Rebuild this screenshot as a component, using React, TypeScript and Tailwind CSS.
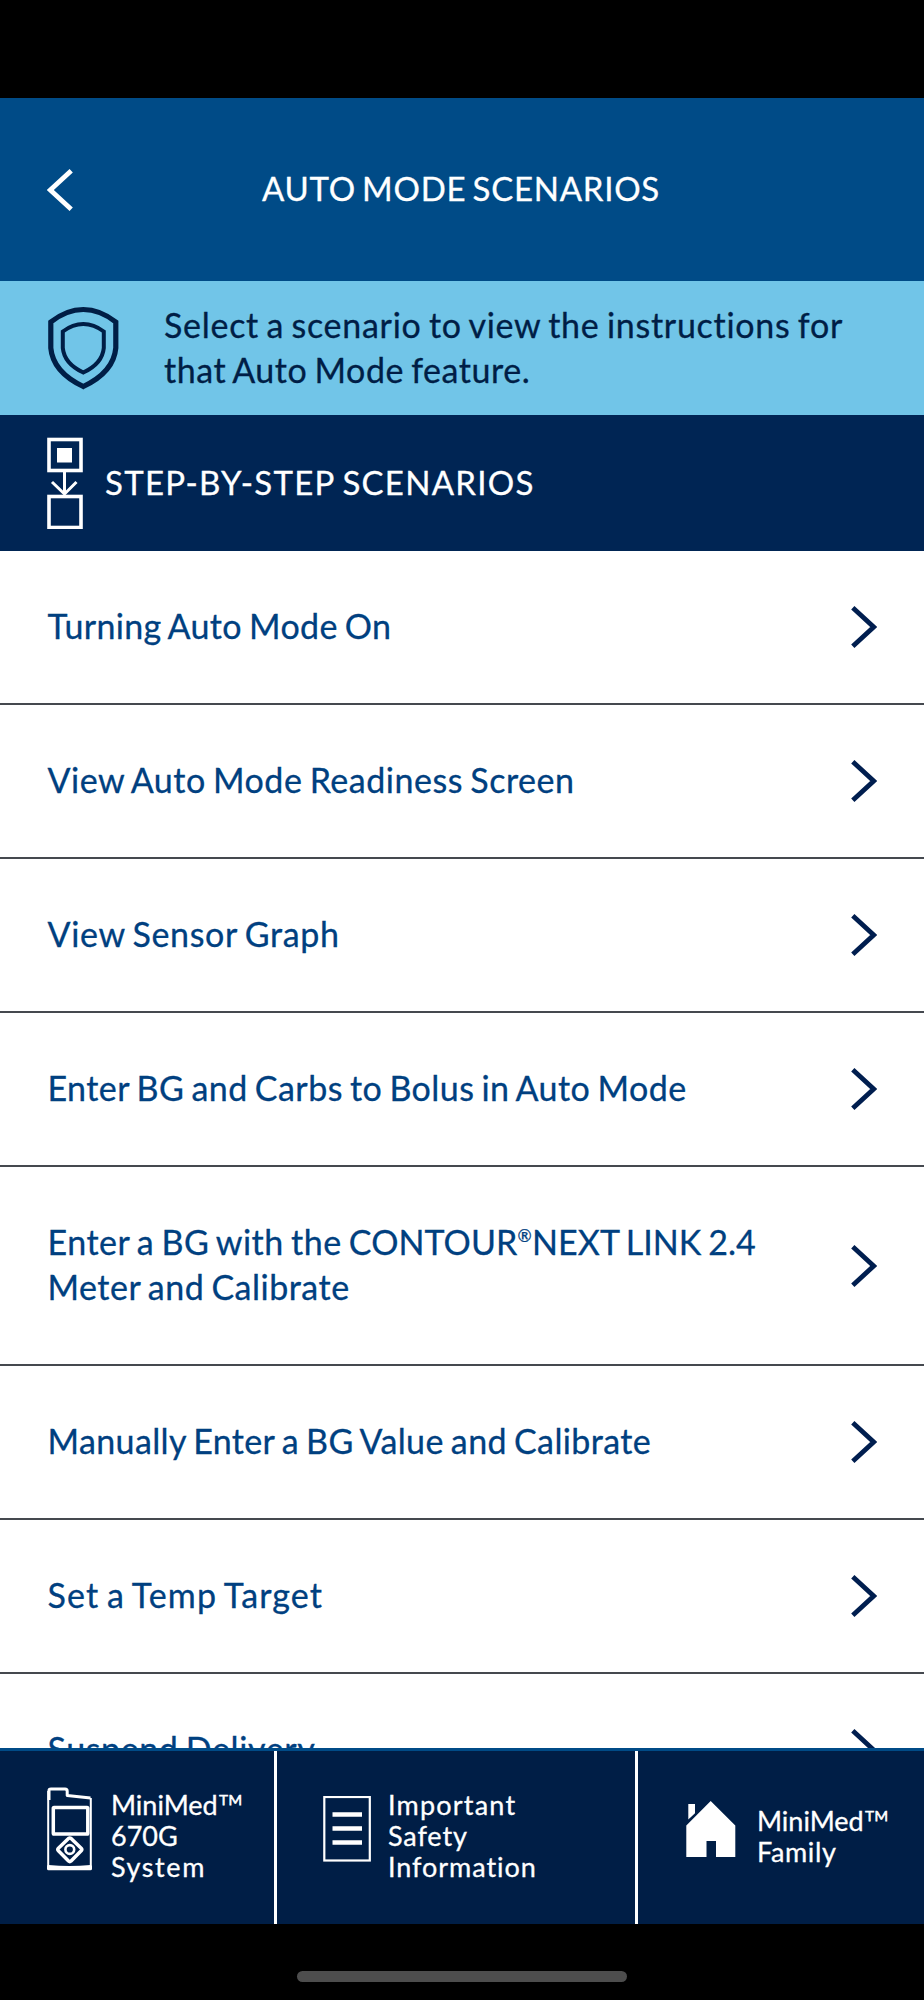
import { ReactNode } from "react";

interface Scenario {
    label: ReactNode;
    tracking: string;
}

const scenarios: Scenario[] = [
    { label: "Turning Auto Mode On", tracking: "tracking-[0.36px]" },
    { label: "View Auto Mode Readiness Screen", tracking: "tracking-[0.53px]" },
    { label: "View Sensor Graph", tracking: "tracking-[0.66px]" },
    { label: "Enter BG and Carbs to Bolus in Auto Mode", tracking: "tracking-[0.45px]" },
    {
        label: (
            <>
                <span className="tracking-[0.5px]">Enter a BG with the </span>
                <span className="tracking-[0.1px]">CONTOUR</span>
                <span className="text-[17px] leading-none align-[13px]">®</span>
                <span className="tracking-[0.05px]">NEXT LINK 2.4</span>
                <br />
                Meter and Calibrate
            </>
        ),
        tracking: "tracking-[0.5px]",
    },
    { label: "Manually Enter a BG Value and Calibrate", tracking: "tracking-[0.38px]" },
    { label: "Set a Temp Target", tracking: "tracking-[1.1px]" },
    { label: "Suspend Delivery", tracking: "tracking-[0.6px]" },
];

function ChevronLeft() {
    return (
        <svg className="w-[26px] h-[42px] shrink-0" viewBox="0 0 26 42" fill="none" stroke="currentColor" strokeWidth="4.8">
            <path d="M24.200 1.800 3.300 21l20.900 19.200" />
        </svg>
    );
}

function ChevronRight() {
    return (
        <svg className="w-[26px] h-[42px] shrink-0" viewBox="0 0 26 42" fill="none" stroke="currentColor" strokeWidth="4.8">
            <path d="M1.800 1.800 22.700 21 1.800 40.200" />
        </svg>
    );
}

function ShieldIcon() {
    return (
        <svg className="w-[72px] h-[84px] shrink-0" viewBox="0 0 72 84" fill="none" stroke="currentColor">
            <path strokeWidth="5.2" d="M36.300 3.5C24.300 3.5 13.300 8.500 3.800 16v26C5.300 59 16.300 71 36.300 80.500 56.300 71 67.300 59 68.800 42V16C59.300 8.500 48.300 3.500 36.300 3.500z" />
            <path strokeWidth="4" d="M36.300 18c-8 0-14.500 3-20.500 7.500V42C16.800 52 23.300 60.500 36.300 66.500 49.300 60.500 55.800 52 56.800 42V25.500C50.800 21 44.300 18 36.300 18z" />
        </svg>
    );
}

function StepsIcon() {
    return (
        <svg className="w-[36px] h-[92px] shrink-0" viewBox="0 0 36 92" fill="none" stroke="currentColor">
            <rect x="2" y="2.500" width="32" height="31" strokeWidth="3.600" />
            <rect x="10" y="11" width="15" height="14.500" fill="currentColor" stroke="none" />
            <path strokeWidth="3" d="M17.500 34v22M5 45l12.500 12 12-12" />
            <rect x="2" y="59.500" width="32" height="31" strokeWidth="3.600" />
        </svg>
    );
}

function PumpIcon() {
    return (
        <svg className="w-[45px] h-[84px] shrink-0" viewBox="0 0 45 84" fill="none" stroke="currentColor" strokeLinejoin="round">
            <path strokeWidth="2" d="M1.200 4v76M43.800 11v69" />
            <path strokeWidth="3" d="M2 13V3.500Q2 2 4 2h14q2.200 0 2.200 2.200V8.500L43.500 11M1.500 79.500v2.300h42v-2.300Q22.500 81.500 1.500 79.500z" />
            <rect x="6.300" y="20.500" width="34.500" height="26.500" rx="0.800" strokeWidth="3.500" />
            <path strokeWidth="3.500" d="M21.500 51.500q1.300-1 2.600 0L34.200 61.200q1.200 1.300 0 2.600L24.100 74q-1.300 1.200-2.600 0L11.400 63.800q-1.200-1.300 0-2.600z" />
            <circle cx="22.800" cy="62.500" r="4.400" strokeWidth="2.600" />
        </svg>
    );
}

function DocumentIcon() {
    return (
        <svg className="w-[48px] h-[66px] shrink-0" viewBox="0 0 48 66" fill="none" stroke="currentColor">
            <rect x="1.300" y="1" width="45.500" height="63.500" strokeWidth="2.200" />
            <path strokeWidth="4.500" d="M9.500 18.500h29.500M9.500 32.500h29.500M9.500 46.500h29.500" />
        </svg>
    );
}

function HouseIcon() {
    return (
        <svg className="w-[50px] h-[56px] shrink-0" viewBox="0 0 50 56" fill="currentColor">
            <path d="M24.700 0 49.300 24.500V56H30V40H20.500V56H0.300V24.500z" />
            <path d="M2.300 3H9v9.300L2.300 18.500z" />
        </svg>
    );
}

function Trademark() {
    return <span className="text-[35px] leading-[0] font-light align-[-5px] [-webkit-text-stroke:0.7px]">™</span>;
}

export default function App() {
    return (
        <main className="flex h-[2000px] w-[924px] flex-col overflow-hidden bg-black font-['Lato',sans-serif] text-[33px] leading-[45px] [-webkit-text-stroke:0.3px]">
            {/* Header */}
            <header className="mt-[98px] grid h-[183px] shrink-0 grid-cols-[100px_1fr_100px] items-center bg-[#004b87] text-white">
                <button className="flex pl-[47px]" aria-label="Back">
                    <ChevronLeft />
                </button>
                <h1 className="pb-[3px] pr-[2px] text-center tracking-[0.75px] [word-spacing:-3px]">AUTO MODE SCENARIOS</h1>
            </header>

            {/* Intro */}
            <section className="flex h-[134px] shrink-0 items-start bg-[#71c5e8] pl-[47px] text-[#001e46]">
                <div className="pt-[25px]">
                    <ShieldIcon />
                </div>
                <p className="pl-[45px] pt-[22px] text-[34px] leading-[44.5px] whitespace-nowrap [word-spacing:-2px]">
                    <span className="tracking-[0.72px]">Select a scenario to view the instructions for</span>
                    <br />
                    <span className="tracking-[0.53px]">that Auto Mode feature.</span>
                </p>
            </section>

            {/* Section title */}
            <section className="flex h-[136px] shrink-0 items-center gap-[22px] bg-[#002554] pl-[47px] text-white">
                <StepsIcon />
                <h2 className="pb-[2px] tracking-[1.27px] [word-spacing:-2px]">STEP-BY-STEP SCENARIOS</h2>
            </section>

            {/* Scenario list */}
            <ul className="h-[1197px] shrink-0 overflow-hidden bg-white text-[#004080]">
                {scenarios.map((scenario, index) => (
                    <li key={index} className="flex items-center justify-between border-b-2 border-[#45494f] pl-[47.5px] pr-[47px]">
                        <p className={`pt-[52px] pb-[55px] text-[34px] whitespace-nowrap [word-spacing:-2px] ${scenario.tracking}`}>
                            {scenario.label}
                        </p>
                        <span className="text-[#001e4f]">
                            <ChevronRight />
                        </span>
                    </li>
                ))}
            </ul>

            {/* Bottom navigation */}
            <nav className="flex h-[176px] shrink-0 border-t-3 border-[#004b87] bg-[#001e46] text-[27px] leading-[31px] text-white">
                <a className="flex w-[277px] items-center border-r-3 border-white pl-[47px]">
                    <div className="pb-[17px]">
                        <PumpIcon />
                    </div>
                    <p className="pb-1 pl-[19px]">
                        MiniMed
                        <Trademark />
                        <br />
                        670G
                        <br />
                        <span className="tracking-[1.6px]">System</span>
                    </p>
                </a>
                <a className="flex w-[361px] items-center border-r-3 border-white pl-[46px]">
                    <div className="pb-[17px]">
                        <DocumentIcon />
                    </div>
                    <p className="pb-1 pl-[17px]">
                        <span className="tracking-[1.2px]">Important</span>
                        <br />
                        <span className="tracking-[0.89px]">Safety</span>
                        <br />
                        <span className="tracking-[0.95px]">Information</span>
                    </p>
                </a>
                <a className="flex flex-1 items-center pl-[48px]">
                    <div className="pb-[17px]">
                        <HouseIcon />
                    </div>
                    <p className="pb-1 pl-[21px]">
                        MiniMed
                        <Trademark />
                        <br />
                        <span className="tracking-[0.63px]">Family</span>
                    </p>
                </a>
            </nav>

            {/* Home indicator */}
            <div className="mx-auto mt-[47px] h-[11px] w-[330px] shrink-0 rounded-full bg-[#4d4d4d]" />
        </main>
    );
}
